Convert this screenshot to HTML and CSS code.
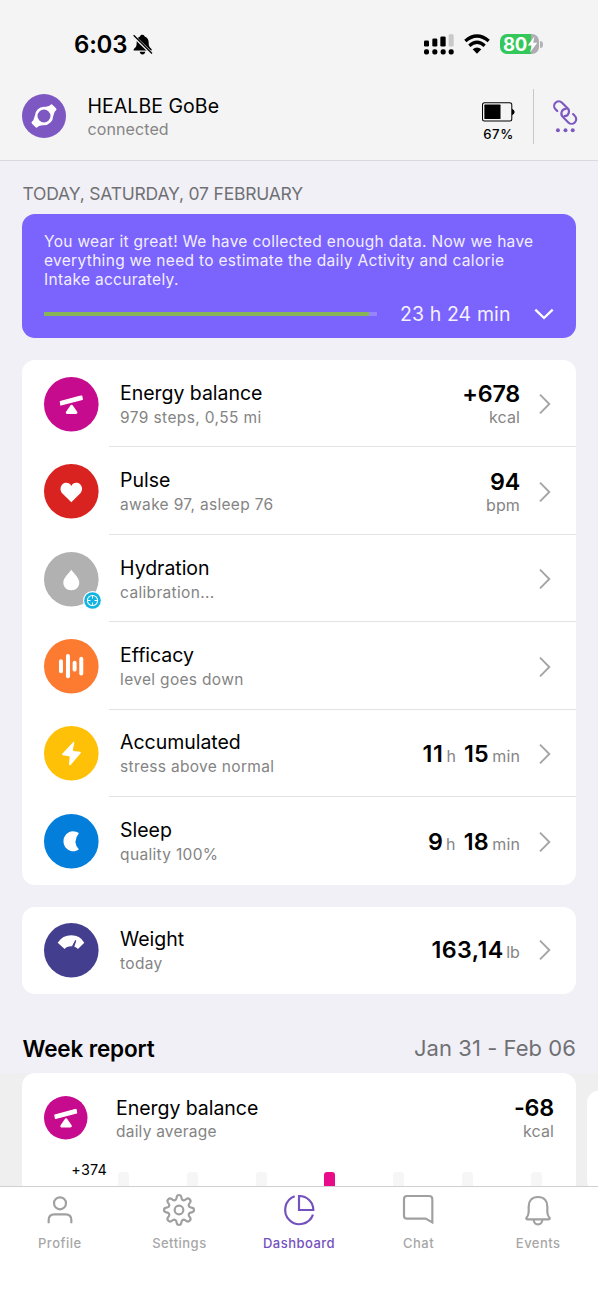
FILE: index.html
```html
<!DOCTYPE html>
<html lang="en">
<head>
<meta charset="utf-8">
<title>Dashboard</title>
<link rel="stylesheet" href="styles.css">
</head>
<body>
<svg class="defs" aria-hidden="true">
  <symbol id="chevron" viewBox="0 0 36 60"><path d="M3 2 31 30 3 58" fill="none" stroke="#a3a3a6" stroke-width="5.500"/></symbol>
  <symbol id="balance" viewBox="0 0 72 58"><path d="M3 19 67 2 69 12 5 29Z" fill="#fff" stroke="#fff" stroke-width="4" stroke-linejoin="round"/><path d="M37 33 24 52H50Z" fill="#fff" stroke="#fff" stroke-width="9" stroke-linejoin="round"/></symbol>
</svg>
<header class="top">
  <div class="status">
    <div class="clock"><span class="time">6:03</span>
      <svg class="mute" viewBox="0 0 60 62"><path d="M28 2c5 0 6 3 7 5 9 3 12 10 12 19 0 10 2 14 9 19v4H2v-4c7-5 9-9 9-19C11 17 13 10 21 7c1-3 3-5 7-5ZM20 53h17c-1 5-4 8-8.500 8S21 58 20 53Z"/><path d="M-1 3 57 59" stroke="#f4f4f4" stroke-width="9"/><path d="M2 3 57 58" stroke="#000" stroke-width="4"/></svg>
    </div>
    <div class="indicators">
      <svg class="signal" viewBox="0 0 90 62"><g><rect y="19" width="15" height="18" rx="4"/><rect x="25" y="13" width="15" height="24" rx="4"/><rect x="49" y="7" width="16" height="30" rx="4"/><rect x="74" width="15" height="37" rx="4" fill="#c9c9c9"/><rect y="45" width="15" height="16" rx="6"/><rect x="25" y="45" width="15" height="16" rx="6"/><rect x="50" y="45" width="15" height="16" rx="6"/><rect x="74" y="45" width="15" height="16" rx="6"/></g></svg>
      <svg class="wifi" viewBox="0 0 78 58"><g fill="none" stroke="#000" stroke-width="10"><path d="M4 20Q39-10 74 20"/><path d="M16 34Q39 14 62 34"/></g><path d="M26 45Q39 34 52 45L39 58Z"/></svg>
      <div class="charge"><span>80</span><svg viewBox="0 0 30 46"><path d="M20 1 2 26H13L8 45 28 18H17Z" fill="#fff"/></svg></div><i class="charge-tip"></i>
    </div>
  </div>
  <div class="device">
    <svg class="device-icon" viewBox="0 0 132 132"><circle cx="66" cy="66" r="66" fill="#7d57c2"/><path d="M64 40 78 37Q83 36 85 33 88 29 92 33L102 43Q106 47 101 50 98 52 97 56L93 68ZM68 92 54 95Q49 96 47 99 44 103 40 99L30 89Q26 85 31 82 34 80 35 76L39 64Z" fill="#fff"/><circle cx="66" cy="66" r="23.500" fill="#7d57c2" stroke="#fff" stroke-width="8"/></svg>
    <div class="device-text"><div class="device-name">HEALBE GoBe</div><div class="device-state">connected</div></div>
    <div class="device-battery">
      <svg viewBox="0 0 98 58"><rect x="1.500" y="1.500" width="87" height="54" rx="6" fill="#f4f4f4" stroke="#000" stroke-width="3"/><rect x="7" y="7" width="48" height="43" rx="2"/><path d="M89 19Q97 23 97 29T89 39Z"/></svg>
      <span>67%</span>
    </div>
    <div class="link">
      <svg viewBox="0 0 76 102"><g fill="none" stroke="#7d57c2" stroke-width="6.500" stroke-linecap="round"><path d="M13 33 7.600 27.400A14 14 0 0 1 27.400 7.600L44.400 24.600A14 14 0 0 1 35 48.500"/><path d="M61 42 66.400 47.600A14 14 0 0 1 46.600 67.400L29.600 50.400A14 14 0 0 1 39 26.500"/></g><g fill="#7d57c2"><circle cx="15" cy="91" r="6"/><circle cx="38" cy="91" r="6"/><circle cx="60" cy="91" r="6"/></g></svg>
    </div>
  </div>
</header>
<main class="content">
  <div class="date">TODAY, SATURDAY, 07 FEBRUARY</div>
  <section class="notice">
    <p>You wear it great! We have collected enough data. Now we have<br>everything we need to estimate the daily Activity and calorie<br>Intake accurately.</p>
    <div class="progress-row"><div class="track"><div class="fill"></div></div><span class="duration">23 h 24 min</span>
      <svg class="down" viewBox="0 0 60 36"><path d="M4 5 30 30 56 5" fill="none" stroke="#fff" stroke-width="7"/></svg></div>
  </section>
  <section class="card metrics">
    <div class="row">
      <svg class="icon" viewBox="0 0 164 164"><circle cx="82" cy="82" r="82" fill="#c70b8e"/><use href="#balance" x="46" y="55" width="72" height="58"/></svg>
      <div class="body"><div class="text"><div class="title">Energy balance</div><div class="sub steps">979 steps, 0,55 mi</div></div>
      <div class="value stacked"><b>+678</b><span>kcal</span></div><svg class="chev"><use href="#chevron"/></svg></div>
    </div>
    <div class="row">
      <svg class="icon" viewBox="0 0 164 164"><circle cx="82" cy="82" r="82" fill="#d92320"/><path d="M82 66C77 54 63 54 56 60c-9 9-8 22 1 30L82 115l25-25c9-8 10-21 1-30-7-6-21-6-26 6Z" fill="#fff"/></svg>
      <div class="body"><div class="text"><div class="title">Pulse</div><div class="sub">awake 97, asleep 76</div></div>
      <div class="value stacked"><b>94</b><span>bpm</span></div><svg class="chev"><use href="#chevron"/></svg></div>
    </div>
    <div class="row">
      <div class="icon-wrap"><svg class="icon" viewBox="0 0 164 164"><circle cx="82" cy="82" r="82" fill="#b1b1b1"/><path d="M82 53C74 65 58 77 58 91c0 14 9 24 24 24s24-10 24-24C106 77 90 65 82 53Z" fill="#fff"/></svg>
      <svg class="badge" viewBox="0 0 56 56"><circle cx="28" cy="28" r="28" fill="#fff"/><circle cx="28" cy="28" r="24.500" fill="#12b5e2"/><g fill="none" stroke="#fff" stroke-width="3"><circle cx="28" cy="28" r="15"/><path d="M28 13V22M28 34V43M13 28H22M34 28H43"/></g></svg></div>
      <div class="body"><div class="text"><div class="title">Hydration</div><div class="sub">calibration...</div></div><svg class="chev"><use href="#chevron"/></svg></div>
    </div>
    <div class="row">
      <svg class="icon" viewBox="0 0 164 164"><circle cx="82" cy="82" r="82" fill="#fd7a31"/><g fill="#fff"><rect x="45" y="61" width="12" height="42" rx="6"/><rect x="66" y="45" width="12" height="73" rx="6"/><rect x="86" y="65" width="12" height="33" rx="6"/><rect x="106" y="53" width="12" height="57" rx="6"/></g></svg>
      <div class="body"><div class="text"><div class="title">Efficacy</div><div class="sub">level goes down</div></div><svg class="chev"><use href="#chevron"/></svg></div>
    </div>
    <div class="row">
      <svg class="icon" viewBox="0 0 164 164"><circle cx="82" cy="82" r="82" fill="#ffc107"/><path d="M88 48 55 83Q53 87 57 88L75 91Q78 92 77 96L75 114Q76 120 80 117L110 82Q112 78 108 77L89 75Q86 74 87 70L91 50Q91 46 88 48Z" fill="#fff"/></svg>
      <div class="body"><div class="text"><div class="title">Accumulated</div><div class="sub">stress above normal</div></div>
      <div class="value"><b class="eleven">11</b><span>h</span><b class="second">15</b><span>min</span></div><svg class="chev"><use href="#chevron"/></svg></div>
    </div>
    <div class="row">
      <svg class="icon" viewBox="0 0 164 164"><circle cx="82" cy="82" r="82" fill="#047edb"/><path d="M105 57Q97 52 87 52A30 30 0 1 0 105 107Q84 84 105 57Z" fill="#fff"/></svg>
      <div class="body"><div class="text"><div class="title">Sleep</div><div class="sub">quality 100%</div></div>
      <div class="value"><b>9</b><span>h</span><b class="second">18</b><span>min</span></div><svg class="chev"><use href="#chevron"/></svg></div>
    </div>
  </section>
  <section class="card">
    <div class="row">
      <svg class="icon" viewBox="0 0 164 164"><circle cx="82" cy="82" r="82" fill="#443e8e"/><path d="M41 59Q56 37 82 37T121 59L102 78Q97 72 91 71L97 53 94 51 84 70Q69 69 62 78Z" fill="#fff"/></svg>
      <div class="body"><div class="text"><div class="title">Weight</div><div class="sub">today</div></div>
      <div class="value"><b class="mass">163,14</b><span>lb</span></div><svg class="chev"><use href="#chevron"/></svg></div>
    </div>
  </section>
  <div class="week"><h2>Week report</h2><span>Jan 31 - Feb 06</span></div>
  <section class="carousel">
    <article class="report">
      <div class="report-head">
        <svg class="icon small" viewBox="0 0 132 132"><circle cx="66" cy="66" r="66" fill="#c70b8e"/><use href="#balance" x="30" y="39" width="72" height="58"/></svg>
        <div class="text"><div class="title">Energy balance</div><div class="sub">daily average</div></div>
        <div class="value stacked"><b>-68</b><span>kcal</span></div>
      </div>
      <div class="chart"><span class="axis">+374</span><div class="bars"><i></i><i></i><i></i><i class="peak"></i><i></i><i></i><i></i></div></div>
    </article>
    <article class="next"></article>
  </section>
</main>
<nav class="tabs">
  <a><svg viewBox="0 0 96 96"><g fill="none" stroke="#a0a0a0" stroke-width="6.500"><circle cx="48" cy="28" r="18"/><path d="M14 88V78Q14 61 31 61H65Q82 61 82 78V88"/></g></svg><span>Profile</span></a>
  <a><svg viewBox="0 0 96 96"><g fill="none" stroke="#a0a0a0" stroke-width="6.500" stroke-linejoin="round"><circle cx="48" cy="48" r="13"/><path d="M48 3Q54 3 55 10Q56 18 62 19Q66 19 70 15Q76 11 80 16Q85 20 81 26Q77 30 77 34Q78 40 86 41Q93 42 93 48Q93 54 86 55Q78 56 77 62Q77 66 81 70Q85 76 80 80Q76 85 70 81Q66 77 62 77Q56 78 55 86Q54 93 48 93Q42 93 41 86Q40 78 34 77Q30 77 26 81Q20 85 16 80Q11 76 15 70Q19 66 19 62Q18 56 10 55Q3 54 3 48Q3 42 10 41Q18 40 19 34Q19 30 15 26Q11 20 16 16Q20 11 26 15Q30 19 34 19Q40 18 41 10Q42 3 48 3Z"/></g></svg><span>Settings</span></a>
  <a class="active"><svg viewBox="0 0 96 96"><g fill="none" stroke="#7451bd" stroke-width="6.500"><path d="M35 7A43 43 0 1 0 90 62"/><path d="M48 6A42 42 0 0 1 91 48H48Z"/></g></svg><span>Dashboard</span></a>
  <a><svg viewBox="0 0 96 96"><path d="M12 6H78Q88 6 88 16V85L68 74H12Q3 74 3 65V15Q3 6 12 6Z" fill="none" stroke="#a0a0a0" stroke-width="6.500"/></svg><span>Chat</span></a>
  <a><svg viewBox="0 0 96 96"><g fill="none" stroke="#a0a0a0" stroke-width="6.500" stroke-linejoin="round"><path d="M48 9C29 9 20 22 20 38V54C20 64 17 67 13 72Q12 76 17 76H79Q84 76 83 72C79 67 76 64 76 54V38C76 22 67 9 48 9Z"/><path d="M35 78C36 88 42 91 48 91S60 88 61 78"/></g></svg><span>Events</span></a>
</nav>
</body>
</html>
```
FILE: styles.css
```css
* { box-sizing: border-box; }
body { margin: 0; width: 598px; height: 1300px; display: flex; flex-direction: column; overflow: hidden; background: #f1f0f6; color: #000; font-family: Inter, "Liberation Sans", sans-serif; }
svg { display: block; flex: none; overflow: visible; }
.defs { width: 0; height: 0; position: absolute; }

.top { height: 161px; flex: none; background: #f4f4f4; border-bottom: 1px solid #dadade; }
.status { height: 88px; display: flex; justify-content: space-between; padding: 1px 55px 0 74px; align-items: center; }
.clock { display: flex; align-items: center; gap: 6px; }
.time { font-size: 24px; font-weight: 600; letter-spacing: -0.2px; line-height: 30px; }
.mute { width: 20px; height: 21px; }
.indicators { display: flex; align-items: center; margin-top: -1px; }
.signal { width: 30px; height: 21px; margin-right: 10px; }
.wifi { width: 26px; height: 20px; margin-right: 10px; }
.charge { width: 39px; height: 20px; border-radius: 7px; display: flex; align-items: center; padding-left: 3px; background: linear-gradient(90deg, #34c759 80%, #aeadb2 80%); color: #fff; font-size: 18.500px; font-weight: 700; letter-spacing: -0.3px; }
.charge svg { width: 11px; height: 17px; }
.charge-tip { width: 3px; height: 7px; margin-left: 1px; border-radius: 0 3px 3px 0; background: #b4b4b8; }

.device { display: flex; align-items: center; height: 56px; padding: 0 20px 0 21.500px; }
.device-icon { width: 44px; height: 44px; }
.device-text { margin-left: 22px; flex: 1; padding-top: 2px; }
.device-name { font-size: 19.500px; line-height: 24px; letter-spacing: 0.05px; }
.device-state { font-size: 16px; line-height: 23px; color: #858585; letter-spacing: 0.1px; }
.device-battery { width: 34px; display: flex; flex-direction: column; align-items: center; padding-top: 13px; }
.device-battery svg { width: 33px; height: 20px; }
.device-battery span { font-size: 13.200px; line-height: 18px; font-weight: 500; margin-top: 3px; letter-spacing: 0.6px; padding-left: 1px; }
.link { height: 55px; margin-left: 18px; padding: 11px 0 0 19px; border-left: 1px solid #c8c8c8; }
.link svg { width: 25px; height: 34px; }

.content { flex: 1; min-height: 0; overflow: hidden; padding: 20.500px 22px 0; }
.date { font-size: 17.500px; line-height: 24px; color: #707074; letter-spacing: -0.21px; padding-left: 0.500px; }
.notice { height: 124px; margin-top: 8.500px; padding: 17.500px 22px 0; border-radius: 13px; background: #7b63fd; color: #fff; }
.notice p { margin: 0; font-size: 15.500px; line-height: 19.400px; letter-spacing: 0.31px; color: #f2efff; white-space: nowrap; }
.progress-row { display: flex; align-items: center; height: 24px; margin-top: 12.500px; }
.track { width: 333px; height: 4px; background: #9885fb; }
.fill { width: 325px; height: 4px; background: #86b456; }
.duration { width: 110px; margin-left: 23px; font-size: 19.500px; letter-spacing: 0.1px; white-space: nowrap; color: #f4f2ff; }
.down { width: 20px; height: 12px; margin-left: 24px; }

.card { margin-top: 22px; background: #fff; border-radius: 13px; }
.row { height: 87.450px; display: flex; align-items: center; padding-left: 21.500px; }
.icon, .icon-wrap { width: 54.600px; height: 54.600px; flex: none; }
.icon-wrap { position: relative; }
.badge { position: absolute; width: 19px; height: 19px; right: -3.500px; bottom: -4px; }
.body { flex: 1; height: 100%; margin-left: 11px; padding: 0 25px 0 11px; display: flex; align-items: center; border-bottom: 1px solid #e3e3e6; }
.metrics .body { padding-top: 2px; }
.metrics .icon { margin-top: 0.500px; }
.row:last-child .body { border-bottom: 0; }
.text { flex: 1; padding-top: 2px; }
.title { font-size: 19.500px; line-height: 25px; letter-spacing: -0.04px; white-space: nowrap; }
.sub { font-size: 15.500px; line-height: 24px; color: #848484; letter-spacing: 0.32px; white-space: nowrap; }
.steps { letter-spacing: 0.38px; }
.value { display: flex; align-items: baseline; margin-right: 19px; }
.value b { font-size: 23.300px; font-weight: 600; line-height: 26px; letter-spacing: -0.2px; }
.value span { font-size: 16px; line-height: 20px; color: #858585; letter-spacing: 0.1px; margin-left: 3.500px; }
.value .second { margin-left: 8px; letter-spacing: 0.2px; }
.value .eleven { letter-spacing: 0.6px; margin-right: -0.500px; }
.value .mass { letter-spacing: 0.4px; margin-right: -1px; }
.stacked { flex-direction: column; align-items: flex-end; padding-top: 0.500px; }
.chev { width: 12px; height: 20px; }

.week { display: flex; justify-content: space-between; align-items: center; height: 35px; margin-top: 36.500px; }
.week h2 { margin: 0 0 0 0.500px; font-size: 22.500px; font-weight: 600; letter-spacing: -0.15px; }
.week span { font-size: 22px; color: #707074; letter-spacing: 0.05px; }
.carousel { display: flex; gap: 11px; height: 120px; margin: 7.500px -22px 0; padding-left: 22px; background: #efefef; overflow: hidden; }
.report { width: 554px; flex: none; border-radius: 13px 13px 0 0; background: #fff; padding: 21px 22px 0; }
.report-head { display: flex; height: 48px; align-items: center; }
.small { width: 43.500px; height: 43.500px; }
.report .text { margin-left: 28.500px; padding: 2px 0 0; }
.report .sub { line-height: 21px; letter-spacing: 0.22px; }
.report .value { margin-right: 0; padding: 0; }
.chart { display: flex; height: 51px; }
.axis { width: 63px; text-align: right; font-size: 14.400px; letter-spacing: 0.2px; line-height: 18px; margin-top: 19px; }
.bars { display: flex; flex: 1; gap: 57.800px; padding: 30px 0 0 11px; }
.bars i { width: 11px; flex: none; border-radius: 3px 3px 0 0; background: #f6f6f6; }
.bars .peak { background: #e80c88; }
.next { width: 554px; flex: none; margin-top: 17px; border-radius: 13px; background: #fff; }

.tabs { height: 114px; flex: none; display: grid; grid-template-columns: repeat(5, 1fr); background: #fff; border-top: 1px solid #d0d0d0; padding-top: 7px; }
.tabs a { display: flex; flex-direction: column; align-items: center; color: #a7a7a7; }
.tabs svg { width: 32px; height: 32px; }
.tabs span { margin-top: 8px; font-size: 13px; line-height: 18px; font-weight: 500; letter-spacing: 0.48px; }
.tabs .active { color: #7451bd; }
```
